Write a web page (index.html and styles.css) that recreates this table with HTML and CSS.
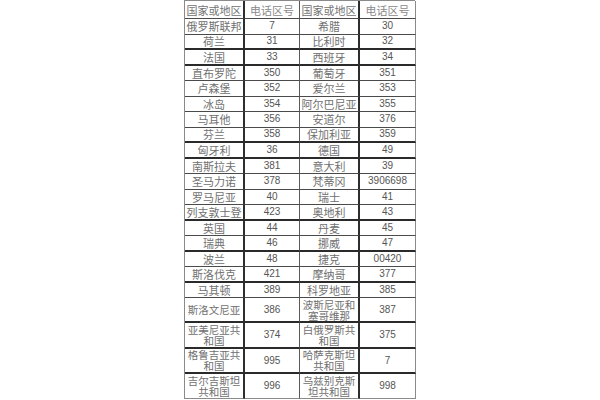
FILE: index.html
```html
<!DOCTYPE html>
<html lang="zh-CN">
<head>
<meta charset="utf-8">
<title>国家或地区电话区号</title>
<link rel="stylesheet" href="styles.css">
</head>
<body>
<div class="codes" role="table">
  <div class="row head" role="row"><div class="cell">国家或地区</div><div class="cell n">电话区号</div><div class="cell">国家或地区</div><div class="cell n">电话区号</div></div>
  <div class="row" role="row"><div class="cell">俄罗斯联邦</div><div class="cell num">7</div><div class="cell">希腊</div><div class="cell num">30</div></div>
  <div class="row thick" role="row"><div class="cell">荷兰</div><div class="cell num">31</div><div class="cell">比利时</div><div class="cell num">32</div></div>
  <div class="row thick" role="row"><div class="cell">法国</div><div class="cell num">33</div><div class="cell">西班牙</div><div class="cell num">34</div></div>
  <div class="row" role="row"><div class="cell">直布罗陀</div><div class="cell num">350</div><div class="cell">葡萄牙</div><div class="cell num">351</div></div>
  <div class="row" role="row"><div class="cell">卢森堡</div><div class="cell num">352</div><div class="cell">爱尔兰</div><div class="cell num">353</div></div>
  <div class="row" role="row"><div class="cell">冰岛</div><div class="cell num">354</div><div class="cell">阿尔巴尼亚</div><div class="cell num">355</div></div>
  <div class="row" role="row"><div class="cell">马耳他</div><div class="cell num">356</div><div class="cell">安道尔</div><div class="cell num">376</div></div>
  <div class="row thick" role="row"><div class="cell">芬兰</div><div class="cell num">358</div><div class="cell">保加利亚</div><div class="cell num">359</div></div>
  <div class="row thick" role="row"><div class="cell">匈牙利</div><div class="cell num">36</div><div class="cell">德国</div><div class="cell num">49</div></div>
  <div class="row" role="row"><div class="cell">南斯拉夫</div><div class="cell num">381</div><div class="cell">意大利</div><div class="cell num">39</div></div>
  <div class="row" role="row"><div class="cell">圣马力诺</div><div class="cell num">378</div><div class="cell">梵蒂冈</div><div class="cell num">3906698</div></div>
  <div class="row" role="row"><div class="cell">罗马尼亚</div><div class="cell num">40</div><div class="cell">瑞士</div><div class="cell num">41</div></div>
  <div class="row thick" role="row"><div class="cell">列支敦士登</div><div class="cell num">423</div><div class="cell">奥地利</div><div class="cell num">43</div></div>
  <div class="row" role="row"><div class="cell">英国</div><div class="cell num">44</div><div class="cell">丹麦</div><div class="cell num">45</div></div>
  <div class="row thick" role="row"><div class="cell">瑞典</div><div class="cell num">46</div><div class="cell">挪威</div><div class="cell num">47</div></div>
  <div class="row" role="row"><div class="cell">波兰</div><div class="cell num">48</div><div class="cell">捷克</div><div class="cell num">00420</div></div>
  <div class="row thick" role="row"><div class="cell">斯洛伐克</div><div class="cell num">421</div><div class="cell">摩纳哥</div><div class="cell num">377</div></div>
  <div class="row" role="row"><div class="cell">马其顿</div><div class="cell num">389</div><div class="cell">科罗地亚</div><div class="cell num">385</div></div>
  <div class="row tall thick" role="row"><div class="cell">斯洛文尼亚</div><div class="cell num">386</div><div class="cell">波斯尼亚和塞哥维那</div><div class="cell num">387</div></div>
  <div class="row tall thick" role="row"><div class="cell">亚美尼亚共和国</div><div class="cell num">374</div><div class="cell">白俄罗斯共和国</div><div class="cell num">375</div></div>
  <div class="row tall thick" role="row"><div class="cell">格鲁吉亚共和国</div><div class="cell num">995</div><div class="cell">哈萨克斯坦共和国</div><div class="cell num">7</div></div>
  <div class="row tall last" role="row"><div class="cell">吉尔吉斯坦共和国</div><div class="cell num">996</div><div class="cell">乌兹别克斯坦共和国</div><div class="cell num">998</div></div>
</div>
</body>
</html>
```

FILE: styles.css
```css
html, body {
  margin: 0;
  padding: 0;
  background: #ffffff;
}

body {
  width: 600px;
  height: 400px;
  overflow: hidden;
}

.codes {
  margin: 0 0 0 184px;
  width: 231px;
  display: grid;
  grid-template-columns: 60px 55px 60px 56px;
  grid-template-rows: 18px repeat(18, 15.5px) repeat(4, 25.25px);
  border-left: 1px solid #8a8a8a;
  border-top: 1px solid #8a8a8a;
  box-sizing: border-box;
  font-family: "Noto Sans CJK SC", "Noto Sans", sans-serif;
  font-size: 11px;
  color: #707070;
}

.row {
  display: contents;
}

.cell {
  box-sizing: border-box;
  display: flex;
  align-items: center;
  justify-content: center;
  text-align: center;
  padding: 0 1px;
  line-height: 12px;
  overflow: hidden;
  white-space: normal;
  border-bottom: 1px solid #4a4a4a;
  border-right: 1px solid #5a5a5a;
}

.cell:nth-child(1),
.cell:nth-child(3) {
  border-right: 2px solid #2e2e2e;
}

.cell:nth-child(4) {
  border-right: 1px solid #8a8a8a;
}

.head .cell {
  color: #727272;
}

.head .cell.n {
  color: #8a8a8a;
}

.cell.num {
  font-family: "Liberation Sans", Arial, sans-serif;
  font-size: 10px;
  color: #555555;
}

.tall .cell {
  line-height: 11px;
  font-size: 10.5px;
}

.tall .cell.num {
  font-size: 10px;
}

.thick .cell {
  border-bottom: 2px solid #2a2a2a;
}

.last .cell {
  border-bottom: 1px solid #8a8a8a;
}
```
